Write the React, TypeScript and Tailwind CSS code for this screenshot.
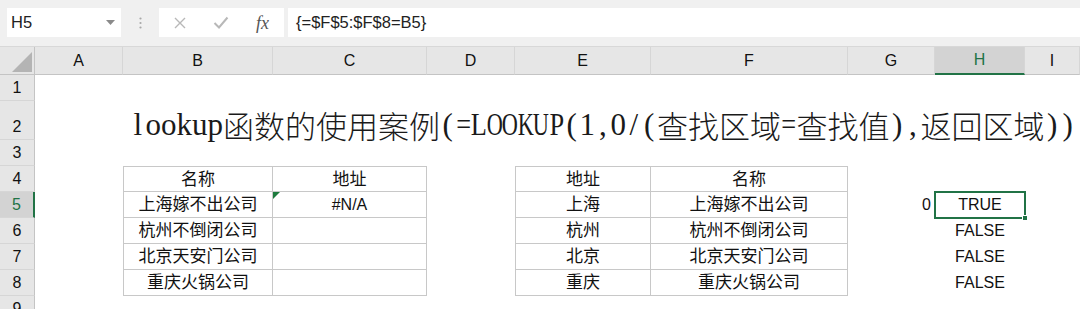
import React from "react";

const FONT = "font-['Liberation_Sans','Noto_Sans_CJK_SC',sans-serif]";
const COLS = ["A", "B", "C", "D", "E", "F", "G", "H", "I"];

type CellDef = {
  text?: string;
  cls?: string;
  align?: "center" | "right" | "left";
  extra?: React.ReactNode;
};

const leftNames = ["上海嫁不出公司", "杭州不倒闭公司", "北京天安门公司", "重庆火锅公司"];
const cities = ["上海", "杭州", "北京", "重庆"];
const B = "border-[#c8c8c8]";
const CJK_TXT = "text-[17px]";
const LAT_TXT = "text-[16px]";

function buildRow(r: number): (CellDef | null)[] {
  const cells: (CellDef | null)[] = Array(9).fill(null).map(() => ({}));
  if (r >= 4 && r <= 8) {
    const top = r === 4 ? "border-t" : "";
    const i = r - 5;
    cells[1] = {
      text: r === 4 ? "名称" : leftNames[i],
      cls: `border-l border-r border-b ${top} ${B} ${CJK_TXT}`,
      align: "center",
    };
    cells[2] = {
      text: r === 4 ? "地址" : r === 5 ? "#N/A" : "",
      cls: `border-r border-b ${top} ${B} relative ${r === 5 ? LAT_TXT : CJK_TXT}`,
      align: "center",
      extra:
        r === 5 ? (
          <svg className="absolute left-0 top-0" width="7" height="7" viewBox="0 0 7 7">
            <polygon points="0,0 7,0 0,7" fill="#1e7b3e" />
          </svg>
        ) : null,
    };
    cells[4] = {
      text: r === 4 ? "地址" : cities[i],
      cls: `border-l border-r border-b ${top} ${B} ${CJK_TXT}`,
      align: "center",
    };
    cells[5] = {
      text: r === 4 ? "名称" : leftNames[i],
      cls: `border-r border-b ${top} ${B} ${CJK_TXT}`,
      align: "center",
    };
    if (r === 5) {
      cells[6] = { text: "0", align: "right", cls: `pr-[4px] ${LAT_TXT}` };
      cells[7] = {
        text: "TRUE",
        align: "center",
        cls: `relative ${LAT_TXT}`,
        extra: (
          <>
            <div className="absolute -left-px -top-px -right-px -bottom-px border-2 border-[#217346]" />
            <div className="absolute -right-[3px] -bottom-[3px] w-[6px] h-[6px] bg-[#217346] border border-white" />
          </>
        ),
      };
    } else if (r > 5) {
      cells[7] = { text: "FALSE", align: "center", cls: LAT_TXT };
    }
  }
  return cells;
}

const rowHeights: Record<number, string> = {
  1: "h-[26px]",
  2: "h-[39px]",
  3: "h-[26px]",
  4: "h-[26px]",
  5: "h-[26px]",
  6: "h-[26px]",
  7: "h-[26px]",
  8: "h-[26px]",
  9: "h-[26px]",
};

const WIDE = "OKU";
const MID = "LP=";

function Latin({ s }: { s: string }) {
  return (
    <>
      {s.split("").map((ch, i) => (
        <span
          key={i}
          className={`inline-flex justify-center w-[15.5px] font-['Liberation_Serif',serif] ${
            WIDE.includes(ch) ? "scale-x-[0.72]" : MID.includes(ch) ? "scale-x-[0.85]" : ""
          }`}
        >
          {ch}
        </span>
      ))}
    </>
  );
}

function Title() {
  const cjk = "font-['Noto_Sans_CJK_SC',sans-serif] font-light";
  return (
    <div className="col-span-8 flex items-end pl-[7px] whitespace-nowrap overflow-visible text-[31px] leading-[31px] text-[#1a1a1a]">
      <Latin s="lookup" />
      <span className={cjk}>函数的使用案例</span>
      <Latin s="(=LOOKUP(1,0/(" />
      <span className={cjk}>查找区域</span>
      <Latin s="=" />
      <span className={cjk}>查找值</span>
      <Latin s="),"></Latin>
      <span className={cjk}>返回区域</span>
      <Latin s="))" />
    </div>
  );
}

export default function App() {
  return (
    <div className={`w-[1080px] h-[309px] overflow-hidden bg-white text-[#111] ${FONT}`}>
      {/* Formula bar */}
      <div className="h-[47px] bg-[#f0f0f0] flex items-start pt-[8px] pl-[7px] border-b border-[#d8d8d8]">
        <div className="w-[114px] h-[29px] bg-white flex items-center justify-between pl-[4px] pr-[6px]">
          <span className="text-[16.5px] text-[#222]">H5</span>
          <svg width="9" height="5" viewBox="0 0 9 5">
            <polygon points="0,0 9,0 4.5,5" fill="#8a8a8a" />
          </svg>
        </div>
        <div className="w-[38px] h-[29px] flex items-center justify-center">
          <svg width="3" height="12" viewBox="0 0 3 12">
            <circle cx="1.5" cy="1.5" r="1.1" fill="#a8a8a8" />
            <circle cx="1.5" cy="6" r="1.1" fill="#a8a8a8" />
            <circle cx="1.5" cy="10.5" r="1.1" fill="#a8a8a8" />
          </svg>
        </div>
        <div className="w-[125px] h-[29px] bg-white flex items-center">
          <div className="w-[42px] flex justify-center">
            <svg width="14" height="14" viewBox="0 0 14 14">
              <path d="M2 2 L12 12 M12 2 L2 12" stroke="#b8b8b8" strokeWidth="1.4" />
            </svg>
          </div>
          <div className="w-[40px] flex justify-center">
            <svg width="16" height="13" viewBox="0 0 16 13">
              <path d="M1.5 7 L6 11.5 L14.5 1.5" stroke="#b8b8b8" strokeWidth="2" fill="none" />
            </svg>
          </div>
          <div className="w-[43px] flex justify-center">
            <span className="font-['Liberation_Serif',serif] italic text-[18px] text-[#555] leading-none">
              fx
            </span>
          </div>
        </div>
        <div className="flex-1 ml-[4px] h-[29px] bg-white flex items-center pl-[8px]">
          <span className="text-[16.5px] text-[#222]">{"{=$F$5:$F$8=B5}"}</span>
        </div>
      </div>

      {/* Sheet grid */}
      <div className="grid grid-cols-[35px_88px_150px_154px_88px_136px_197px_87px_90px_1fr]">
        <div className="h-[28px] bg-[#e6e6e6] border-b border-r border-[#c4c4c4] relative">
          <svg className="absolute left-0 top-0" width="35" height="28" viewBox="0 0 35 28">
            <polygon points="32,5 32,25 12,25" fill="#b4b4b4" />
          </svg>
        </div>
        {COLS.map((c) => {
          const sel = c === "H";
          return (
            <div
              key={c}
              className={`h-[28px] flex items-center justify-center text-[16px] ${
                sel
                  ? "bg-[#d3d3d3] text-[#217346] border-b-2 border-b-[#217346]"
                  : "bg-[#e6e6e6] text-[#111] border-b border-b-[#c4c4c4]"
              } border-r border-r-[#d6d6d6]`}
            >
              {c}
            </div>
          );
        })}

        {[1, 2, 3, 4, 5, 6, 7, 8, 9].map((r) => {
          const sel = r === 5;
          const header = (
            <div
              key={`h${r}`}
              className={`${rowHeights[r]} flex items-end justify-center pb-[3px] text-[16px] leading-[18px] border-b border-b-[#d6d6d6] ${
                sel
                  ? "bg-[#d3d3d3] text-[#217346] border-r-2 border-r-[#217346]"
                  : "bg-[#e6e6e6] text-[#111] border-r border-r-[#c4c4c4]"
              }`}
            >
              {r}
            </div>
          );
          if (r === 2) {
            return (
              <React.Fragment key={r}>
                {header}
                <div className={rowHeights[r]} />
                <Title />
              </React.Fragment>
            );
          }
          const cells = buildRow(r);
          return (
            <React.Fragment key={r}>
              {header}
              {cells.map((cell, i) => (
                <div
                  key={i}
                  className={`${rowHeights[r]} flex items-center leading-none ${
                    cell?.align === "center"
                      ? "justify-center"
                      : cell?.align === "right"
                      ? "justify-end"
                      : "justify-start"
                  } ${cell?.cls ?? ""}`}
                >
                  {cell?.text ? <span>{cell.text}</span> : null}
                  {cell?.extra}
                </div>
              ))}
            </React.Fragment>
          );
        })}
      </div>
    </div>
  );
}
